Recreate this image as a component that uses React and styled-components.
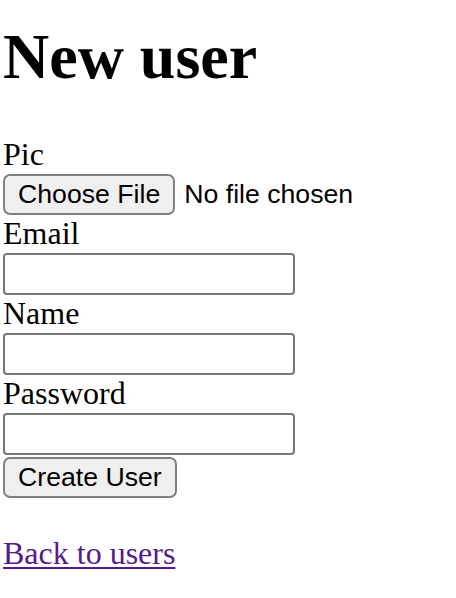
import React from 'react';
import styled, { createGlobalStyle } from 'styled-components';

const GlobalStyle = createGlobalStyle`
  html, body {
    margin: 0;
    padding: 0;
    background: #fff;
  }
  body {
    font-family: "Liberation Serif", "Times New Roman", serif;
    color: #000;
  }
`;

const Page = styled.div`
  padding: 20px 0 0 3px;
`;

const Title = styled.h1`
  margin: 0 0 43px;
  font-size: 64px;
  line-height: 73px;
  font-weight: bold;
`;

const Form = styled.form`
  display: flex;
  flex-direction: column;
  align-items: flex-start;
`;

const Label = styled.label`
  display: block;
  font-size: 32px;
  line-height: 37px;
  height: 37px;
`;

const Row = styled.div`
  display: flex;
  align-items: center;
  padding-top: ${(p) => p.$offset || 1}px;
`;

const Button = styled.button`
  box-sizing: border-box;
  height: 41px;
  padding: 0 13px;
  font-family: "Liberation Sans", Arial, sans-serif;
  font-size: 26.67px;
  color: #000;
  background: #efefef;
  border: 2px solid #808080;
  border-radius: 7px;
  display: flex;
  align-items: center;
  cursor: pointer;
`;

const FileNote = styled.span`
  margin-left: 9px;
  font-family: "Liberation Sans", Arial, sans-serif;
  font-size: 26.67px;
`;

const TextInput = styled.input`
  box-sizing: border-box;
  width: 292px;
  height: 42px;
  margin: 0;
  padding: 2px 4px;
  font-size: 26.67px;
  font-family: "Liberation Sans", Arial, sans-serif;
  border: 2px solid #767676;
  border-radius: 4px;
  background: #fff;
  outline: none;
`;

const Spacer = styled.div`
  height: 37px;
`;

const BackLink = styled.a`
  display: block;
  font-size: 32px;
  line-height: 37px;
  color: #551a8b;
  text-decoration: underline;
  text-underline-offset: 3px;
  text-decoration-thickness: 2px;
`;

export default function App() {
  return (
    <>
      <GlobalStyle />
      <Page>
        <Title>New user</Title>
        <Form onSubmit={(e) => e.preventDefault()}>
          <div>
            <Label htmlFor="user_pic">Pic</Label>
            <Row>
              <Button type="button">Choose File</Button>
              <FileNote>No file chosen</FileNote>
            </Row>
          </div>
          <div>
            <Label htmlFor="user_email">Email</Label>
            <Row>
              <TextInput id="user_email" type="text" />
            </Row>
          </div>
          <div>
            <Label htmlFor="user_name">Name</Label>
            <Row>
              <TextInput id="user_name" type="text" />
            </Row>
          </div>
          <div>
            <Label htmlFor="user_password">Password</Label>
            <Row>
              <TextInput id="user_password" type="password" />
            </Row>
          </div>
          <Row $offset={2}>
            <Button type="submit">Create User</Button>
          </Row>
        </Form>
        <Spacer />
        <BackLink href="#users">Back to users</BackLink>
      </Page>
    </>
  );
}
